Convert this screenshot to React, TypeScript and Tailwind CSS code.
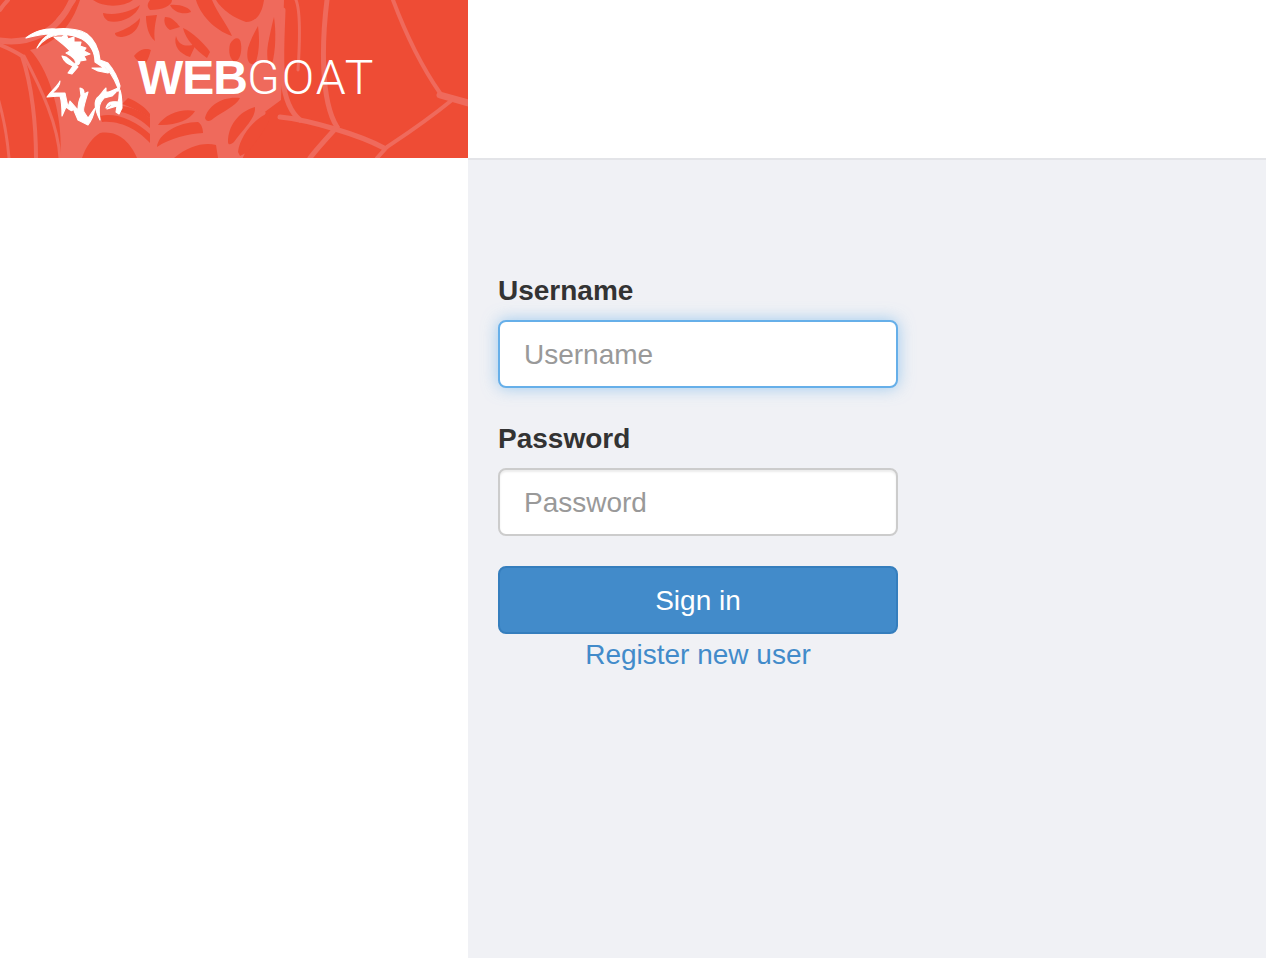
const sans = 'font-["Liberation_Sans",Arial,sans-serif]'

function BrandArt() {
  return (
    <svg className="absolute inset-0" width="468" height="158" viewBox="0 0 468 158">
      {/* spider web: pale body, darker cells cut out of it */}
      <path d="M80 0 L284 0 L281 100 L262 114 L240 158 L60 158 C64 120 50 70 30 50 C56 44 72 25 80 0 Z" fill="#ef6a5c" />
      <g fill="none" stroke="#ef6a5c" strokeLinecap="round">
        <path d="M-4 40 C30 46 58 32 72 0" strokeWidth="6" />
        <path d="M-2 44 C8 48 16 52 22 56 C32 85 36 125 36 158" strokeWidth="4" />
        <path d="M-2 98 C3 115 7 135 9 158" strokeWidth="3" />
        <path d="M24 56 C42 90 58 125 60 158" strokeWidth="3" />
        <path d="M58 20 C66 10 72 4 74 0" strokeWidth="4" />
        <path d="M0 10 C3 5 6 2 8 0" strokeWidth="4" />
        <path d="M393 0 C408 40 424 70 440 93" strokeWidth="4" />
        <path d="M440 95 L468 103" strokeWidth="7" />
        <path d="M452 100 C425 122 405 135 387 147 L377 158" strokeWidth="4" />
        <path d="M280 117 C310 120 360 135 384 148" strokeWidth="5" />
        <path d="M327 0 C322 40 320 100 337 127" strokeWidth="5" />
        <path d="M283 10 C282 50 276 100 300 120" strokeWidth="5" />
        <path d="M337 127 C325 140 316 150 310 158" strokeWidth="5" />
        <path d="M263 113 C255 125 248 140 240 158" strokeWidth="5" />
        <path d="M296 0 C300 10 300 40 298 70" strokeWidth="3" />
      </g>
      <g fill="#ee4c35">
        <path d="M93 0 L133 0 C124 7 104 8 93 0 Z" />
        <path d="M103 13 C115 16 130 12 140 5 C136 18 118 24 108 21 C105 19 103 16 103 13 Z" />
        <path d="M115 33 C125 30 135 24 140 18 C140 28 132 36 122 37 C118 37 115 36 115 33 Z" />
        <path d="M150 0 L172 0 C172 6 162 10 150 10 C146 6 148 3 150 0 Z" />
        <path d="M146 16 L157 15 C154 28 154 36 155 41 C148 36 146 24 146 16 Z" />
        <path d="M165 17 C172 17 176 22 180 27 L170 30 C166 28 163 22 165 17 Z" />
        <path d="M170 5 C180 4 190 8 191 12 C184 15 174 13 170 5 Z" />
        <path d="M176 36 C178 44 184 48 196 44 L190 57 C180 54 173 46 176 36 Z" />
        <path d="M134 56 C140 48 148 48 151 50 C149 56 149 58 145 64 C140 62 136 60 134 56 Z" />
        <path d="M183 28 C192 32 205 44 210 52 L207 58 C196 50 186 40 183 28 Z" />
        <path d="M196 0 L212 0 C218 14 228 26 232 36 C214 30 200 14 196 0 Z" />
        <path d="M216 0 L264 0 C262 14 256 22 246 22 C234 18 222 10 216 0 Z" />
        <path d="M230 44 C234 37 240 36 241 44 C242 52 240 60 235 62 C230 60 228 52 230 44 Z" />
        <path d="M248 48 C252 36 256 30 258 26 C260 40 259 56 255 64 C248 66 246 58 248 48 Z" />
        <path d="M268 44 C270 34 272 24 274 17 C276 30 276 50 272 64 C268 70 266 56 268 44 Z" />
        <path d="M128 98 C138 102 146 108 150 114 L150 118 C138 110 128 106 122 104 Z" />
        <path d="M121 112 C132 114 144 122 150 128 L150 118 C140 110 128 106 121 106 Z" />
        <path d="M102 122 C122 120 140 132 150 143 L150 134 C135 120 115 112 100 116 Z" />
        <path d="M100 133 C118 130 130 142 137 158 L82 158 C86 146 92 138 100 133 Z" />
        <path d="M158 125 C165 114 182 108 195 111 C190 120 175 126 158 125 Z" />
        <path d="M157 147 C158 134 178 122 198 122 C202 124 203 130 203 133 C188 134 170 138 157 147 Z" />
        <path d="M174 158 C188 146 204 142 216 145 L218 158 Z" />
        <path d="M205 118 C208 106 222 96 240 98 C236 106 222 112 214 118 C210 122 206 122 205 118 Z" />
        <path d="M228 142 C228 126 238 112 255 107 C256 118 244 128 234 142 C232 144 228 146 228 142 Z" />
        <path d="M238 152 C240 136 254 118 269 113 C272 124 258 138 248 152 L240 156 Z" />
      </g>
      {/* goat */}
      <g fill="#ffffff" stroke="#ffffff" strokeWidth="1.1" strokeLinejoin="round">
        <path d="M26 38 C34 31 46 28 56 29 C66 28 80 29 87 34 C95 40 99 50 100 60 L108 63 C114 70 118 78 120 86 L119 91 L109 92 L118 88 C114 78 110 70 103 66 C107 70 110 72 108 73 L98 71 L92 68 L104 68 L95 62 C95 52 90 44 82 39 C74 35 66 34 58 35 C48 36 42 41 37 48 C40 42 44 37 50 34 C42 34 34 36 26 38 Z" />
        <path d="M54 37 L62 37 L66 34 L68 39 L74 37 L74 42 L81 42 L80 46 L86 48 L84 51 L90 54 L84 56 L86 60 L80 61 C80 64 78 66 75 64 C77 60 72 56 66 53 L70 51 C66 46 60 42 54 37 Z" />
        <path d="M62 56 L66 57 C72 62 76 65 78 67 L72 74 L68 73 L73 66 C68 64 64 62 62 56 Z" />
        <path d="M60 81 C58 86 52 90 47 97 L60 96 C62 102 62 112 62 116 L66 107 C70 110 74 114 72 106 L78 120 L88 125 C92 120 94 114 95 108 C92 112 90 116 88 118 L84 112 C82 110 86 100 88 92 L84 94 C85 90 82 88 80 88 L81 96 C78 102 78 106 78 110 L70 101 L68 107 L65 93 L52 93 C56 90 60 86 60 81 Z" />
        <path d="M106 88 C102 92 100 96 97 98 C94 102 94 108 100 120 C98 106 100 102 104 98 L112 96 L116 92 L106 92 Z" />
        <path d="M120 90 C122 96 122 102 122 108 L119 114 L116 112 L117 106 L107 109 L114 104 C110 104 108 106 106 108 C108 100 114 102 118 102 C120 98 118 94 120 90 Z" />
      </g>
    </svg>
  )
}

export default function App() {
  return (
    <div className={`${sans} h-[974px] bg-white`}>
      <header className="flex h-[158px]">
        <div className="relative flex h-[158px] w-[468px] items-center overflow-hidden bg-[#ee4c35] pl-[138px] pb-[2px]">
          <BrandArt />
          <span className="relative text-[48px] leading-none text-white">
            <span className="font-bold tracking-[-1px]">WEB</span>
            <span className='font-["Roboto",sans-serif] font-light tracking-[2px]'>GOAT</span>
          </span>
        </div>
      </header>

      <div className="flex">
        <aside className="w-[468px]" />
        <main className="h-[800px] flex-1 border-t-2 border-[#e3e4e8] bg-[#f0f1f5] px-[30px] pt-[110px]">
          <form className="w-[400px]">
            <label className="mb-[10px] block pt-[2px] text-[28px] leading-[38px] font-bold text-[#333333]">Username</label>
            <input
              placeholder="Username"
              className="block h-[68px] w-full rounded-[8px] border-2 border-[#66afe9] bg-white px-[24px] pt-[2px] text-[28px] text-[#555555] shadow-[0_0_16px_rgba(102,175,233,0.6)] outline-none placeholder:text-[#999999]"
            />
            <label className="mt-[30px] mb-[10px] block pt-[2px] text-[28px] leading-[38px] font-bold text-[#333333]">Password</label>
            <input
              type="password"
              placeholder="Password"
              className="block h-[68px] w-full rounded-[8px] border-2 border-[#cccccc] bg-white px-[24px] pt-[2px] text-[28px] text-[#555555] shadow-[inset_0_2px_2px_rgba(0,0,0,0.075)] outline-none placeholder:text-[#999999]"
            />
            <button type="button" className="mt-[30px] block h-[68px] w-full rounded-[8px] border-2 border-[#357ebd] bg-[#428bca] pt-[2px] text-[28px] text-white">
              Sign in
            </button>
            <div className="pt-[1px] text-center leading-[40px]">
              <a href="#" className="text-[28px] text-[#428bca]">Register new user</a>
            </div>
          </form>
        </main>
      </div>
    </div>
  )
}
